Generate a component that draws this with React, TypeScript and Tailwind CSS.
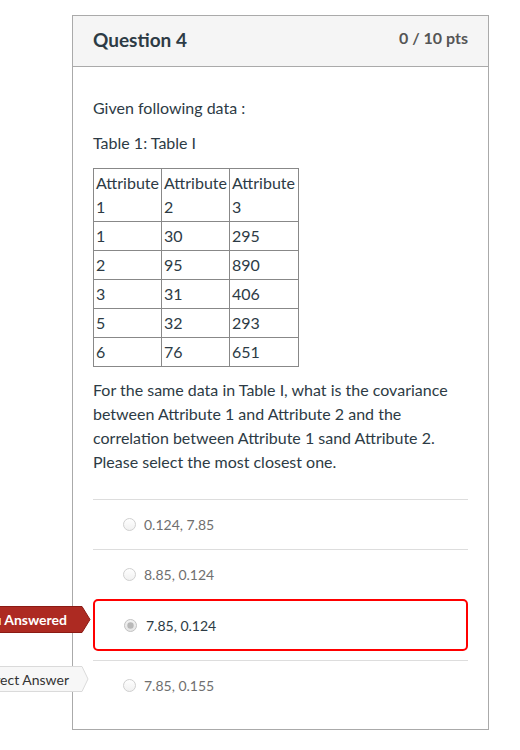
import React from "react";

const font = { fontFamily: "Lato, 'Open Sans', sans-serif" };

function Radio({ checked }: { checked?: boolean }) {
  return (
    <svg width="13" height="13" viewBox="0 0 13 13" className="shrink-0">
      <defs>
        <linearGradient id={checked ? "rg1" : "rg0"} x1="0" y1="0" x2="0" y2="1">
          <stop offset="0" stopColor={checked ? "#f2f2f2" : "#ffffff"} />
          <stop offset="1" stopColor={checked ? "#e4e4e4" : "#f0f0f0"} />
        </linearGradient>
      </defs>
      <circle cx="6.5" cy="6.5" r="6" fill={`url(#${checked ? "rg1" : "rg0"})`} stroke={checked ? "#c2c2c2" : "#cfcfcf"} strokeWidth="1" />
      {checked && <circle cx="6.5" cy="6.5" r="3.2" fill="#b8b8b8" />}
    </svg>
  );
}

const rows = [
  ["1", "30", "295"],
  ["2", "95", "890"],
  ["3", "31", "406"],
  ["5", "32", "293"],
  ["6", "76", "651"],
];

export default function App() {
  return (
    <div className="relative w-[520px] h-[750px] bg-white overflow-hidden text-[#2d3b45]" style={font}>
      <div className="ml-[72px] mt-[15px] w-[417px] border border-[#aaaaaa]">
        <div className="h-[51px] bg-[#f5f5f5] border-b border-[#aaaaaa] flex justify-between px-[20px]">
          <div className="pt-[12px] text-[19px] leading-[24px] font-bold">Question 4</div>
          <div className="pt-[10px] text-[16px] leading-[24px] font-bold text-[#555555]">0 / 10 pts</div>
        </div>
        <div className="px-[20px] pb-[19px]">
          <p className="mt-[29px] text-[16px] leading-[24px]">Given following data :</p>
          <p className="mt-[11px] text-[16px] leading-[24px]">Table 1: Table I</p>
          <table className="mt-[13px] border-collapse text-[16px] leading-[24px]">
            <tbody>
              <tr>
                <td className="w-[68px] border border-[#888888] px-[2px] py-[2px] align-top">Attribute 1</td>
                <td className="w-[68px] border border-[#888888] px-[2px] py-[2px] align-top">Attribute 2</td>
                <td className="w-[69px] border border-[#888888] px-[2px] py-[2px] align-top">Attribute 3</td>
              </tr>
              {rows.map((r, i) => (
                <tr key={i}>
                  {r.map((c, j) => (
                    <td key={j} className="border border-[#888888] px-[2px] py-[2px]">
                      {c}
                    </td>
                  ))}
                </tr>
              ))}
            </tbody>
          </table>
          <p className="mt-[11px] text-[16px] leading-[24px]">
            For the same data in Table I, what is the covariance between Attribute 1 and Attribute 2 and the correlation
            between Attribute 1 sand Attribute 2. Please select the most closest one.
          </p>
          <div className="mt-[25px] text-[14px]">
            <div className="h-[50px] border-t border-[#dddddd] flex items-center pl-[30px] gap-[8px] text-[#6f6f6f]">
              <Radio />
              <span>0.124, 7.85</span>
            </div>
            <div className="h-[50px] border-t border-[#dddddd] flex items-center pl-[30px] gap-[8px] text-[#6f6f6f]">
              <Radio />
              <span>8.85, 0.124</span>
            </div>
            <div className="h-[52px] border-2 border-[#ff0000] rounded-[5px] flex items-center pl-[29px] gap-[9px]">
              <Radio checked />
              <span>7.85, 0.124</span>
            </div>
            <div className="mt-[9px] h-[50px] border-t border-[#dddddd] flex items-center pl-[30px] gap-[8px] text-[#6f6f6f]">
              <Radio />
              <span>7.85, 0.155</span>
            </div>
          </div>
        </div>
      </div>

      <div className="absolute left-0 top-[606px] h-[27px] w-[91px]">
        <svg className="absolute inset-0" width="91" height="27" viewBox="0 0 91 27">
          <polygon points="-5,0.5 82,0.5 90,13.5 82,26.5 -5,26.5" fill="#ad2a22" stroke="#8b1a14" strokeWidth="1" />
        </svg>
        <div className="relative flex h-full items-center justify-end overflow-hidden whitespace-nowrap pr-[24px] text-[14px] font-bold text-white">
          You Answered
        </div>
      </div>

      <div className="absolute left-0 top-[666px] h-[26px] w-[89px]">
        <svg className="absolute inset-0" width="89" height="26" viewBox="0 0 89 26">
          <polygon points="-5,0.5 82,0.5 88,13 82,25.5 -5,25.5" fill="#f7f7f7" stroke="#dadada" strokeWidth="1" />
        </svg>
        <div className="relative flex h-full items-center justify-end overflow-hidden whitespace-nowrap pr-[20px] text-[14px] text-[#333333]">
          Correct Answer
        </div>
      </div>
    </div>
  );
}
